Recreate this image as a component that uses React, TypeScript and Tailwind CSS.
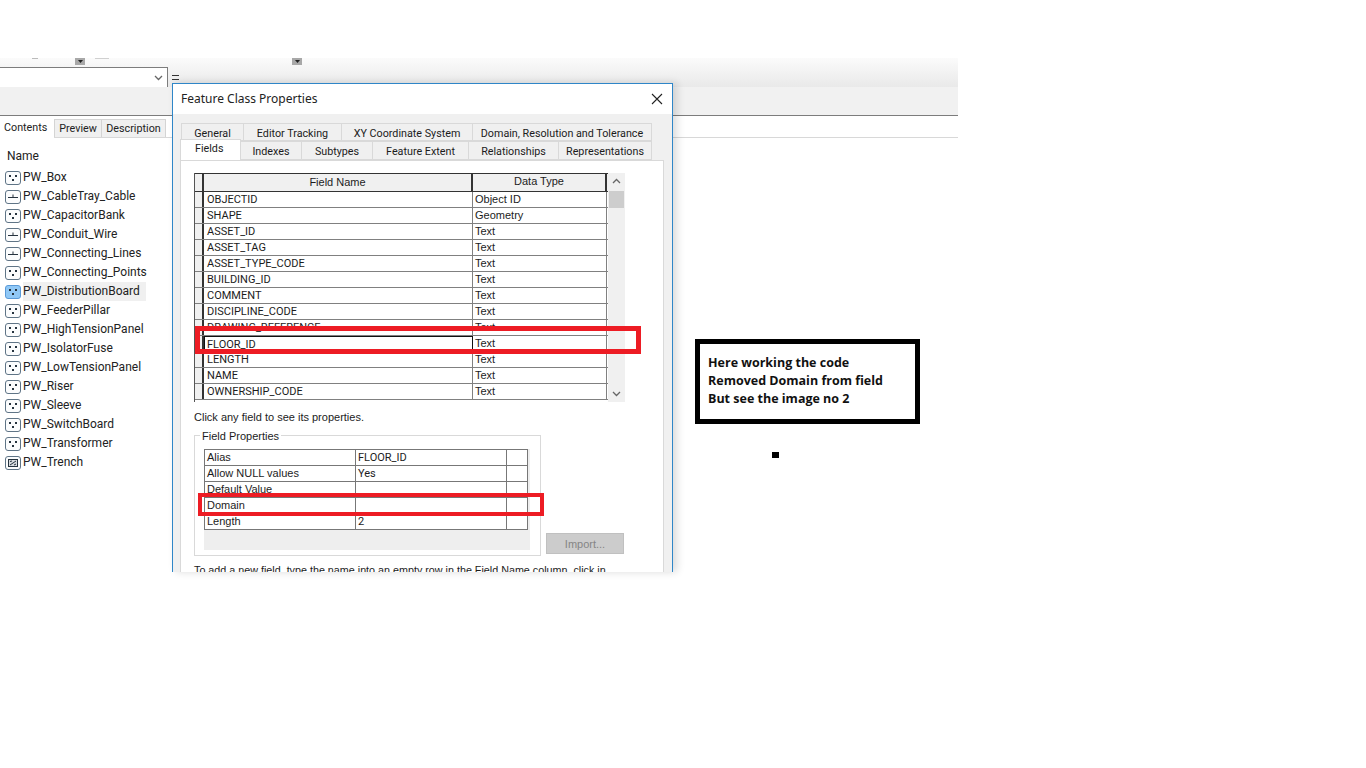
const layers: [string, "point" | "line" | "poly"][] = [
  ["PW_Box", "point"],
  ["PW_CableTray_Cable", "line"],
  ["PW_CapacitorBank", "point"],
  ["PW_Conduit_Wire", "line"],
  ["PW_Connecting_Lines", "line"],
  ["PW_Connecting_Points", "point"],
  ["PW_DistributionBoard", "point"],
  ["PW_FeederPillar", "point"],
  ["PW_HighTensionPanel", "point"],
  ["PW_IsolatorFuse", "point"],
  ["PW_LowTensionPanel", "point"],
  ["PW_Riser", "point"],
  ["PW_Sleeve", "point"],
  ["PW_SwitchBoard", "point"],
  ["PW_Transformer", "point"],
  ["PW_Trench", "poly"],
];

const fields = [
  ["OBJECTID", "Object ID"],
  ["SHAPE", "Geometry"],
  ["ASSET_ID", "Text"],
  ["ASSET_TAG", "Text"],
  ["ASSET_TYPE_CODE", "Text"],
  ["BUILDING_ID", "Text"],
  ["COMMENT", "Text"],
  ["DISCIPLINE_CODE", "Text"],
  ["DRAWING_REFERENCE", "Text"],
  ["FLOOR_ID", "Text"],
  ["LENGTH", "Text"],
  ["NAME", "Text"],
  ["OWNERSHIP_CODE", "Text"],
];

const props = [
  ["Alias", "FLOOR_ID"],
  ["Allow NULL values", "Yes"],
  ["Default Value", ""],
  ["Domain", ""],
  ["Length", "2"],
];

const tabsTop: [string, string][] = [
  ["General", "w-[63px]"],
  ["Editor Tracking", "w-[98px]"],
  ["XY Coordinate System", "w-[131px]"],
  ["Domain, Resolution and Tolerance", "w-[179px]"],
];

const tabsBottom: [string, string][] = [
  ["Indexes", "w-[61px]"],
  ["Subtypes", "w-[71px]"],
  ["Feature Extent", "w-[96px]"],
  ["Relationships", "w-[90px]"],
  ["Representations", "w-[93px]"],
];

const LayerIcon = ({ kind, active }: { kind: string; active: boolean }) => (
  <svg width="16" height="14" viewBox="0 0 16 14" className="shrink-0">
    <rect
      x="0.5"
      y="0.5"
      width="15"
      height="13"
      rx="2.5"
      fill={active ? "#90c8f6" : "#fbfcfd"}
      stroke={active ? "#5a9ad8" : "#5f7486"}
    />
    {kind === "point" && (
      <g fill="#26333f">
        <rect x="4" y="4" width="2" height="2" />
        <rect x="10" y="4" width="2" height="2" />
        <rect x="7" y="8" width="2" height="2" />
      </g>
    )}
    {kind === "line" && (
      <path d="M3 7.5H13M8 4.5V7.5" stroke="#26333f" strokeWidth="1" fill="none" />
    )}
    {kind === "poly" && (
      <g>
        <rect x="3.5" y="3.5" width="9" height="7" fill="#d6dade" stroke="#26333f" />
        <path d="M5 9L11 5M5 5.5L7 5M9 9L11 8" stroke="#26333f" strokeWidth="1" />
      </g>
    )}
  </svg>
);

const Caret = () => (
  <div className="w-[10px] h-[7px] bg-[#a8a8a8] flex items-center justify-center">
    <svg width="5" height="3" viewBox="0 0 5 3">
      <path d="M0 0H5L2.5 3Z" fill="#222" />
    </svg>
  </div>
);

const Chevron = ({ up }: { up?: boolean }) => (
  <svg width="9" height="6" viewBox="0 0 9 6">
    <path
      d={up ? "M1 5L4.5 1.5L8 5" : "M1 1L4.5 4.5L8 1"}
      stroke="#666"
      strokeWidth="1.3"
      fill="none"
    />
  </svg>
);

const App = () => {
  return (
    <div className="relative w-[1366px] h-[768px] bg-white overflow-hidden">
      {/* ArcCatalog behind the dialog */}
      <div className="w-[958px] h-[572px] flex flex-col font-['Roboto',sans-serif]">
        <div className="h-[58px] shrink-0 bg-white" />
        <div className="h-[58px] shrink-0 bg-[#f1f1f1] border-b border-[#7c7c7c] flex flex-col">
          <div className="h-[29px] bg-linear-to-b from-[#fbfbfb] to-[#e9e9e9] flex flex-col">
            <div className="h-[7px] flex">
              <div className="ml-[32px] w-[6px] h-px bg-[#bbbbbb]" />
              <div className="ml-[37px]"><Caret /></div>
              <div className="ml-[10px] w-[14px] h-px bg-[#d0d0d0]" />
              <div className="ml-[183px]"><Caret /></div>
            </div>
            <div className="mt-[2px] flex items-start">
              <div className="w-[168px] h-[20px] bg-white border-t border-r border-[#7d7d7d] flex items-center justify-end pr-[4px]">
                <Chevron />
              </div>
              <div className="ml-[4px] mt-[8px] w-[7px] h-[5px] border-y border-[#333]" />
            </div>
          </div>
        </div>
        <div className="h-[22px] shrink-0 flex items-end border-b border-[#d8d8d8] text-[10.75px] text-[#222]">
          <div className="w-[54px] h-[20px] bg-white pl-[4px] leading-[19px] relative top-px">Contents</div>
          <div className="w-[48px] h-[18px] bg-[#f0f0f0] border border-b-0 border-[#d4d4d4] text-center leading-[18px]">Preview</div>
          <div className="w-[64px] h-[18px] bg-[#f0f0f0] border border-b-0 border-l-0 border-[#d4d4d4] text-center leading-[18px]">Description</div>
        </div>
        <div className="flex flex-col pl-[5px] pt-[9px] text-[12px] text-[#222]">
          <div className="h-[19px] pl-[2px] leading-[19px]">Name</div>
          <div className="mt-[2px] flex flex-col">
            {layers.map(([name, kind]) => {
              const active = name === "PW_DistributionBoard";
              return (
                <div key={name} className="h-[19px] flex items-center gap-[2px]">
                  <LayerIcon kind={kind} active={active} />
                  <span
                    className={
                      active
                        ? "h-[19px] w-[123px] bg-[#f0f0f0] leading-[19px]"
                        : "leading-[19px]"
                    }
                  >
                    {name}
                  </span>
                </div>
              );
            })}
          </div>
        </div>
      </div>

      {/* Feature Class Properties window */}
      <div className="absolute left-[172px] top-[83px] w-[501px] h-[489px] overflow-hidden border-x border-t border-[#2f86c8] bg-[#f0f0f0] flex flex-col shadow-[4px_0_8px_rgba(0,0,0,0.14)] font-['Liberation_Sans',sans-serif] text-[11px] text-[#1c1c1c]">
        <div className="h-[30px] shrink-0 bg-white flex items-center justify-between pl-[8px] pr-[9px] font-['Noto_Sans',sans-serif] text-[12px] text-[#222]">
          <span>Feature Class Properties</span>
          <svg width="12" height="12" viewBox="0 0 12 12">
            <path d="M1 1L11 11M11 1L1 11" stroke="#222" strokeWidth="1.1" fill="none" />
          </svg>
        </div>

        <div className="pl-[7px] pt-[9px] flex flex-col">
          <div className="flex pl-px font-['Roboto',sans-serif] text-[10.75px]">
            {tabsTop.map(([label, w]) => (
              <div
                key={label}
                className={`${w} h-[18px] border border-l-0 first:border-l border-[#d9d9d9] text-center leading-[19px] whitespace-nowrap`}
              >
                {label}
              </div>
            ))}
          </div>
          <div className="flex relative font-['Roboto',sans-serif] text-[10.75px]">
            <div className="w-[61px] h-[21px] -mt-[2px] relative z-10 bg-white border border-b-0 border-[#d9d9d9] pl-[14px] leading-[18px] -mb-px">
              Fields
            </div>
            {tabsBottom.map(([label, w]) => (
              <div
                key={label}
                className={`${w} h-[19px] border border-l-0 border-[#d9d9d9] text-center leading-[19px] whitespace-nowrap`}
              >
                {label}
              </div>
            ))}
          </div>

          <div className="w-[484px] h-[420px] bg-white border border-[#d9d9d9] pl-[13px] pt-[12px] flex flex-col">
            {/* fields grid */}
            <div className="flex w-[431px] h-[229px]">
              <div className="w-[414px] border-l border-[#555] flex flex-col">
                <div className="h-[19px] flex bg-[#f0f0f0] border-y border-[#333]">
                  <div className="w-[9px] border-r-2 border-[#333]" />
                  <div className="w-[269px] border-r-2 border-[#333] text-center leading-[17px]">Field Name</div>
                  <div className="w-[134px] border-r-2 border-[#333] text-center leading-[15px]">Data Type</div>
                </div>
                {fields.map(([name, type]) => {
                  const current = name === "FLOOR_ID";
                  return (
                    <div key={name} className="h-[16px] flex shrink-0 border-b border-[#808080] leading-[15px]">
                      <div className="w-[9px] bg-[#f0f0f0] border-r-2 border-[#333]" />
                      <div
                        className={
                          current
                            ? "w-[269px] border border-[#111] pl-[2px] whitespace-nowrap overflow-hidden font-['Roboto',sans-serif]"
                            : "w-[269px] border-r border-[#808080] pl-[3px] whitespace-nowrap overflow-hidden font-['Roboto',sans-serif]"
                        }
                      >
                        {name}
                      </div>
                      <div className="w-[134px] border-r border-[#808080] pl-[2px]">{type}</div>
                    </div>
                  );
                })}
              </div>
              <div className="w-[17px] bg-[#f0f0f0] flex flex-col items-center justify-between py-[5px]">
                <div className="w-full flex flex-col items-center gap-[7px]">
                  <Chevron up />
                  <div className="w-[15px] h-[17px] bg-[#cdcdcd]" />
                </div>
                <Chevron />
              </div>
            </div>

            <div className="mt-[8px] h-[14px] leading-[14px]">Click any field to see its properties.</div>

            {/* field properties group */}
            <div className="mt-[11px] relative w-[347px] h-[121px] border border-[#d9d9d9] pl-[9px] pt-[13px]">
              <div className="absolute left-[5px] -top-[7px] bg-white px-[2px] leading-[14px]">Field Properties</div>
              <div className="w-[326px] h-[101px] bg-[#eeeeee]">
                <div className="w-[324px] border-t border-l border-[#777] bg-white">
                  {props.map(([label, value]) => (
                    <div key={label} className="h-[16px] flex border-b border-[#777] leading-[15px]">
                      <div className="w-[151px] border-r border-[#777] pl-[2px]">{label}</div>
                      <div className="w-[151px] border-r border-[#777] pl-[2px] font-['Roboto',sans-serif]">{value}</div>
                      <div className="w-[21px] border-r border-[#777]" />
                    </div>
                  ))}
                </div>
              </div>
              <div className="absolute left-[351px] top-[97px] w-[78px] h-[21px] bg-[#cccccc] border border-[#c0c0c0] text-[#858585] text-center leading-[20px]">
                Import...
              </div>
            </div>

            <div className="mt-[7px] h-[14px] leading-[14px] whitespace-nowrap text-[10.75px]">
              To add a new field, type the name into an empty row in the Field Name column, click in
            </div>
          </div>
        </div>
      </div>

      {/* paint-style annotations on top of the capture */}
      <div className="absolute left-[195px] top-[326px] w-[446px] h-[28px] border-[5px] border-[#ed1c24]" />
      <div className="absolute left-[198px] top-[493px] w-[346px] h-[23px] border-[4px] border-[#ed1c24]" />

      <div className="absolute left-[695px] top-[339px] w-[225px] h-[85px] bg-white border-[5px] border-black pl-[8px] pt-[10px] font-['Open_Sans',sans-serif] font-bold text-[12.5px] leading-[18px] text-[#111]">
        <div>Here working the code</div>
        <div>Removed Domain from field</div>
        <div>But see the image no 2</div>
      </div>
      <div className="absolute left-[772px] top-[452px] w-[7px] h-[6px] bg-black" />
    </div>
  );
};

export default App;
